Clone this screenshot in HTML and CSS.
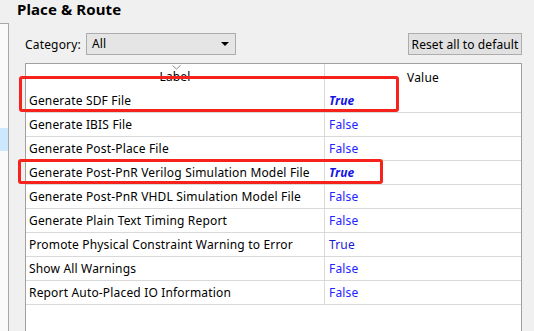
FILE: index.html
```html
<!DOCTYPE html>
<html lang="en">
<head>
  <meta charset="UTF-8" />
  <title>Place &amp; Route</title>
  <link rel="stylesheet" href="styles.css">
</head>
<body>

  <h1 class="title">Place &amp; Route</h1>

  <div class="layout">
    <div class="sidebar">
      <div class="sidebar-selected"></div>
    </div>

    <div class="main">
      <div class="toolbar">
        <label class="category">Category:
          <span class="select">All<span class="select-arrow"></span></span>
        </label>
        <button class="reset">Reset all to default</button>
      </div>

      <div class="grid">
        <div class="head">
          <div class="head-cell label-head">
            <svg class="sort" width="9" height="5" viewBox="0 0 9 5"><polyline points="0.5,0.5 4.5,4 8.5,0.5" fill="none" stroke="#8a8a8a" stroke-width="1"/></svg>
            Label
          </div>
          <div class="head-cell value-head">Value</div>
        </div>

        <div class="row"><div class="cell">Generate SDF File</div><div class="cell value changed">True</div></div>
        <div class="row"><div class="cell">Generate IBIS File</div><div class="cell value">False</div></div>
        <div class="row"><div class="cell">Generate Post-Place File</div><div class="cell value">False</div></div>
        <div class="row"><div class="cell">Generate Post-PnR Verilog Simulation Model File</div><div class="cell value changed">True</div></div>
        <div class="row"><div class="cell">Generate Post-PnR VHDL Simulation Model File</div><div class="cell value">False</div></div>
        <div class="row"><div class="cell">Generate Plain Text Timing Report</div><div class="cell value">False</div></div>
        <div class="row"><div class="cell">Promote Physical Constraint Warning to Error</div><div class="cell value default-true">True</div></div>
        <div class="row"><div class="cell">Show All Warnings</div><div class="cell value">False</div></div>
        <div class="row"><div class="cell">Report Auto-Placed IO Information</div><div class="cell value">False</div></div>
      </div>
    </div>
  </div>

  <!-- annotation boxes -->
  <div class="mark mark-sdf"></div>
  <div class="mark mark-verilog"></div>

</body>
</html>
```

FILE: styles.css
```css
body {
  font-family: "Noto Sans", "Open Sans", sans-serif;
  font-size: 12px;
  letter-spacing: 0.17px;
  background-color: #f0f0f0;
  color: #000;
  margin: 0;
  padding: 0;
  height: 331px;
  overflow: hidden;
  display: flex;
  flex-direction: column;
}

.title {
  font-size: 15px;
  font-weight: bold;
  letter-spacing: 0.1px;
  margin: 0 0 0 17px;
  height: 23px;
  line-height: 18px;
}

.layout {
  flex: 1;
  display: flex;
  min-height: 0;
}

.sidebar {
  width: 8px;
  background: #fafafa;
  border-top: 1px solid #a8a8a8;
  border-right: 1px solid #a8a8a8;
  padding-top: 104px;
}

.sidebar-selected {
  height: 23px;
  background: #cce8ff;
}

.main {
  flex: 1;
  display: flex;
  flex-direction: column;
  padding: 10px 12px 0 16px;
  gap: 8px;
}

.toolbar {
  display: flex;
  justify-content: space-between;
  align-items: center;
  height: 22px;
}

.category {
  display: flex;
  align-items: center;
  gap: 5px;
}

.select {
  position: relative;
  width: 143px;
  height: 20px;
  line-height: 20px;
  padding-left: 5px;
  background: #e5e5e5;
  border: 1px solid #acacac;
}

.select-arrow {
  position: absolute;
  right: 6px;
  top: 8px;
  border-left: 4px solid transparent;
  border-right: 4px solid transparent;
  border-top: 4px solid #000;
}

.reset {
  font-family: inherit;
  font-size: 12px;
  letter-spacing: 0.1px;
  height: 22px;
  width: 114px;
  padding: 0;
  background: #e1e1e1;
  border: 1px solid #adadad;
  color: #000;
}

.grid {
  flex: 1;
  background: #fff;
  border: 1px solid #a0a0a0;
  border-bottom: none;
}

.head, .row {
  display: grid;
  grid-template-columns: 299px 1fr;
}

.head {
  height: 25px;
}

.head-cell {
  border-right: 1px solid #d9d9d9;
  text-align: center;
  position: relative;
  padding-top: 4px;
  line-height: 17px;
}

.value-head {
  border-right: none;
  padding-top: 5px;
}

.sort {
  position: absolute;
  left: 146px;
  top: 1px;
}

.row {
  height: 23px;
  border-bottom: 1px solid #d9d9d9;
}

.cell {
  padding-left: 3px;
  line-height: 23px;
  white-space: nowrap;
  border-right: 1px solid #d9d9d9;
}

.cell.value {
  border-right: none;
  padding-left: 4px;
  color: #2323ff;
}

.cell.changed {
  font-weight: bold;
  font-style: italic;
  color: #1414e6;
}

.cell.default-true {
  color: #1a1ad4;
}

/* red annotation boxes */
.mark {
  position: absolute;
  border: 3px solid #f5231c;
  border-radius: 3px;
}

.mark-sdf {
  left: 19px;
  top: 76px;
  width: 374px;
  height: 30px;
}

.mark-verilog {
  left: 18px;
  top: 159px;
  width: 359px;
  height: 19px;
}
```
